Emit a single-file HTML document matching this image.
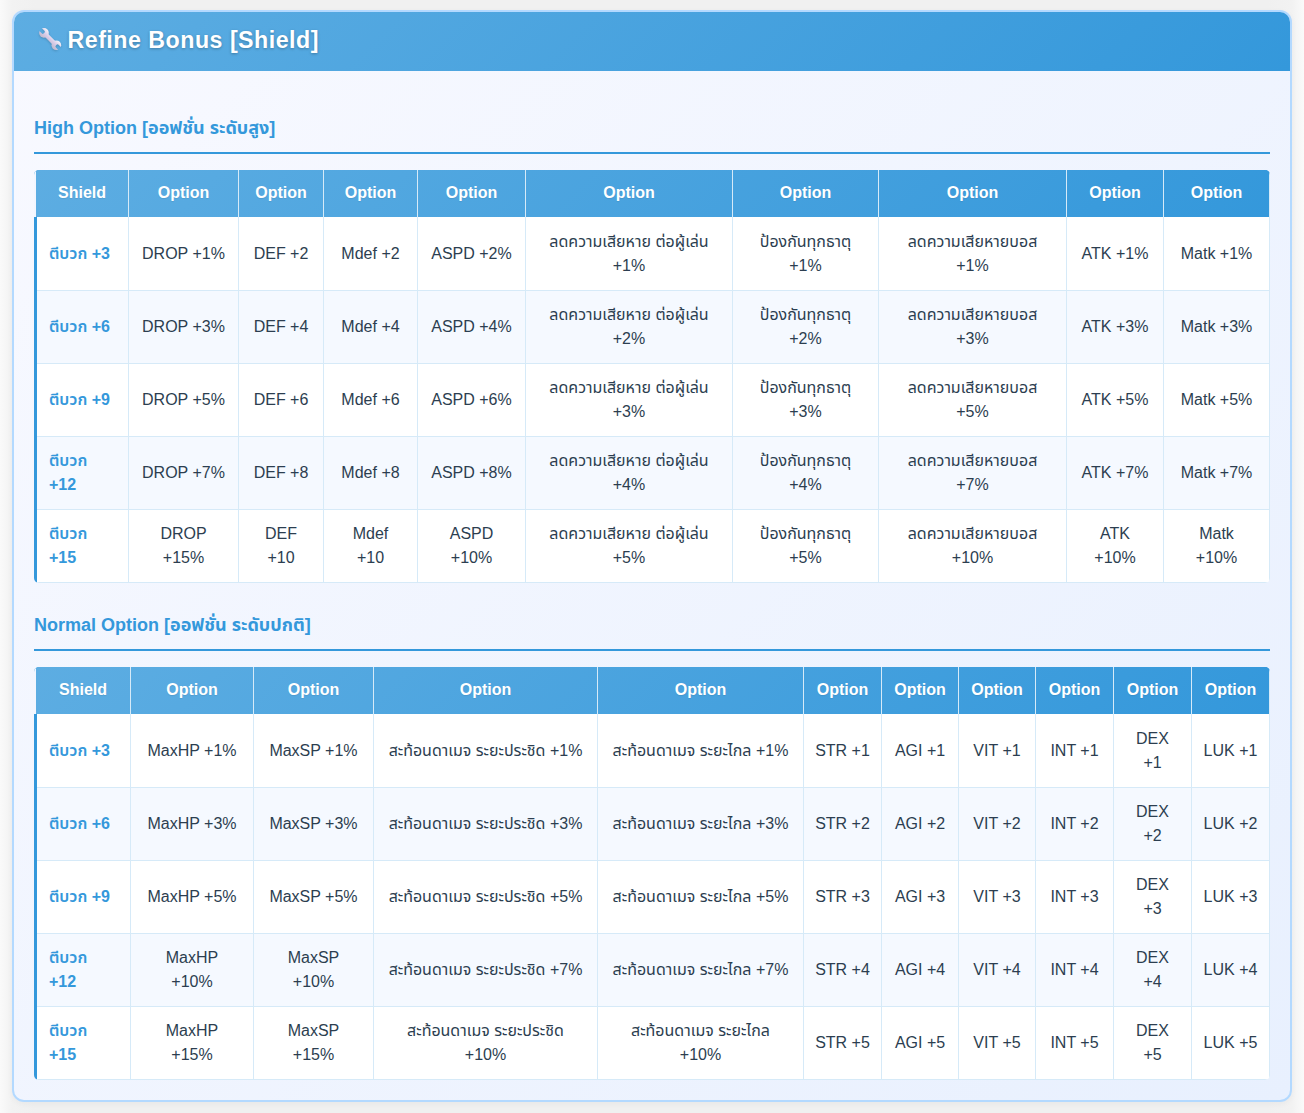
<!DOCTYPE html>
<html lang="th"><head><meta charset="utf-8"><title>Refine Bonus [Shield]</title>
<style>
*{box-sizing:border-box}
html,body{margin:0;padding:0}
body{width:1304px;height:1113px;background:linear-gradient(90deg,#fafafa 0,#f6f6f6 6px,#f2f2f2 12px,#f0f0f0 36px,#f0f0f0 1268px,#f2f2f2 1292px,#f6f6f6 1298px,#fafafa 1304px);position:relative;overflow:hidden;
 font-family:"Liberation Sans","Noto Sans Thai","Noto Sans Thai UI","Loma","Garuda","Sarabun","Tahoma",sans-serif;font-size:16px;line-height:24px;color:#2c3e50}
.card{position:absolute;left:12px;top:10px;width:1280px;height:1092px;border:2px solid #b3d9ff;border-radius:12px;
 background:linear-gradient(135deg,#f8f9ff 0%,#e8f0fe 100%);box-shadow:0 2px 6px rgba(0,0,0,.04);overflow:hidden}
.hdr{position:absolute;left:0;top:0;width:1276px;height:59px;background:linear-gradient(135deg,#5dade2 0%,#3498db 100%);color:#fff}
.hdr .ic{position:absolute;left:22px;top:13px;filter:drop-shadow(0 1px 1px rgba(0,0,0,.18))}
.hdr .ttl{position:absolute;left:53.5px;top:13px;font-size:23.2px;letter-spacing:.5px;line-height:30px;font-weight:700;white-space:nowrap;text-shadow:0 1px 3px rgba(0,0,0,.28)}
.body{position:absolute;left:20px;top:59px;width:1236px}
.st{position:absolute;left:0;width:1236px;margin:0;font-size:18px;line-height:26px;font-weight:700;color:#3498db;border-bottom:2px solid #3498db;height:40px;white-space:nowrap}
.s1{top:43px}
.st span{position:relative;top:1px}
.s2{top:540px}
table.t{position:absolute;left:0;width:1236px;table-layout:fixed;border-collapse:separate;border-spacing:0;border-radius:5px;overflow:hidden}
table.t:nth-of-type(1){top:99px}
table.t:nth-of-type(2){top:596px}
.t th{height:47px;padding:0 4px 2px;text-shadow:0 1px 1px rgba(0,0,0,.08);background:transparent;color:#fff;font-weight:700;text-align:center;border-right:1px solid #d6eaf8;vertical-align:middle;white-space:nowrap}
.t thead tr{background:linear-gradient(135deg,#5dade2 0%,#3498db 100%)}
.t thead{background:linear-gradient(135deg,#5dade2 0%,#3498db 100%)}
.t td{padding:0 4px;text-align:center;vertical-align:middle;border-right:1px solid #d6eaf8;border-bottom:1px solid #d6eaf8;background:#fff;white-space:nowrap}
.t tbody tr{height:73px}
.t tbody tr:first-child{height:74px}
.t tbody tr:nth-child(even) td{background:#f5f9ff}
.t td:first-child{border-left:0;border-bottom:0;box-shadow:inset 3px 0 0 #3498db,inset 0 -1px 0 #d6eaf8;text-align:left;padding-left:15px;padding-bottom:1px;color:#3498db;font-weight:600}
.t th:first-child{border-left:2px solid #f3f6fe}

</style></head><body>
<div class="card">
<div class="hdr"><svg class="ic" viewBox="0 0 32 32" width="32" height="32"><defs><linearGradient id="wg" x1="0" y1="-5" x2="0" y2="5" gradientUnits="userSpaceOnUse"><stop offset="0" stop-color="#f3eff7"/><stop offset=".5" stop-color="#d8cbe7"/><stop offset="1" stop-color="#c2bacd"/></linearGradient><mask id="wm" maskUnits="userSpaceOnUse" x="-20" y="-10" width="40" height="20"><rect x="-20" y="-10" width="40" height="20" fill="#fff"/><rect x="-18" y="-2.1" width="8.6" height="4.2" rx="1.6" fill="#000"/><rect x="9.4" y="-2.1" width="8.6" height="4.2" rx="1.6" fill="#000"/></mask></defs><g transform="translate(14.15 14.1) rotate(45) scale(.91)"><g mask="url(#wm)" fill="url(#wg)"><circle cx="-9.6" cy="0" r="5.3"/><circle cx="9.6" cy="0" r="5.3"/><rect x="-9" y="-2.4" width="18" height="4.8"/></g></g></svg><span class="ttl">Refine Bonus [Shield]</span></div>
<div class="body">
<h3 class="st s1"><span>High Option [ออฟชั่น ระดับสูง]</span></h3>
<table class="t"><colgroup><col style="width:95px"><col style="width:110px"><col style="width:85px"><col style="width:94px"><col style="width:108px"><col style="width:207px"><col style="width:146px"><col style="width:188px"><col style="width:97px"><col style="width:106px"></colgroup>
<thead><tr><th>Shield</th><th>Option</th><th>Option</th><th>Option</th><th>Option</th><th>Option</th><th>Option</th><th>Option</th><th>Option</th><th>Option</th></tr></thead>
<tbody>
<tr><td>ตีบวก +3</td><td>DROP +1%</td><td>DEF +2</td><td>Mdef +2</td><td>ASPD +2%</td><td>ลดความเสียหาย ต่อผู้เล่น<br>+1%</td><td>ป้องกันทุกธาตุ<br>+1%</td><td>ลดความเสียหายบอส<br>+1%</td><td>ATK +1%</td><td>Matk +1%</td></tr>
<tr><td>ตีบวก +6</td><td>DROP +3%</td><td>DEF +4</td><td>Mdef +4</td><td>ASPD +4%</td><td>ลดความเสียหาย ต่อผู้เล่น<br>+2%</td><td>ป้องกันทุกธาตุ<br>+2%</td><td>ลดความเสียหายบอส<br>+3%</td><td>ATK +3%</td><td>Matk +3%</td></tr>
<tr><td>ตีบวก +9</td><td>DROP +5%</td><td>DEF +6</td><td>Mdef +6</td><td>ASPD +6%</td><td>ลดความเสียหาย ต่อผู้เล่น<br>+3%</td><td>ป้องกันทุกธาตุ<br>+3%</td><td>ลดความเสียหายบอส<br>+5%</td><td>ATK +5%</td><td>Matk +5%</td></tr>
<tr><td>ตีบวก<br>+12</td><td>DROP +7%</td><td>DEF +8</td><td>Mdef +8</td><td>ASPD +8%</td><td>ลดความเสียหาย ต่อผู้เล่น<br>+4%</td><td>ป้องกันทุกธาตุ<br>+4%</td><td>ลดความเสียหายบอส<br>+7%</td><td>ATK +7%</td><td>Matk +7%</td></tr>
<tr><td>ตีบวก<br>+15</td><td>DROP<br>+15%</td><td>DEF<br>+10</td><td>Mdef<br>+10</td><td>ASPD<br>+10%</td><td>ลดความเสียหาย ต่อผู้เล่น<br>+5%</td><td>ป้องกันทุกธาตุ<br>+5%</td><td>ลดความเสียหายบอส<br>+10%</td><td>ATK<br>+10%</td><td>Matk<br>+10%</td></tr>
</tbody></table>

<h3 class="st s2"><span>Normal Option [ออฟชั่น ระดับปกติ]</span></h3>
<table class="t"><colgroup><col style="width:97px"><col style="width:123px"><col style="width:120px"><col style="width:224px"><col style="width:206px"><col style="width:78px"><col style="width:77px"><col style="width:77px"><col style="width:78px"><col style="width:78px"><col style="width:78px"></colgroup>
<thead><tr><th>Shield</th><th>Option</th><th>Option</th><th>Option</th><th>Option</th><th>Option</th><th>Option</th><th>Option</th><th>Option</th><th>Option</th><th>Option</th></tr></thead>
<tbody>
<tr><td>ตีบวก +3</td><td>MaxHP +1%</td><td>MaxSP +1%</td><td>สะท้อนดาเมจ ระยะประชิด +1%</td><td>สะท้อนดาเมจ ระยะไกล +1%</td><td>STR +1</td><td>AGI +1</td><td>VIT +1</td><td>INT +1</td><td>DEX<br>+1</td><td>LUK +1</td></tr>
<tr><td>ตีบวก +6</td><td>MaxHP +3%</td><td>MaxSP +3%</td><td>สะท้อนดาเมจ ระยะประชิด +3%</td><td>สะท้อนดาเมจ ระยะไกล +3%</td><td>STR +2</td><td>AGI +2</td><td>VIT +2</td><td>INT +2</td><td>DEX<br>+2</td><td>LUK +2</td></tr>
<tr><td>ตีบวก +9</td><td>MaxHP +5%</td><td>MaxSP +5%</td><td>สะท้อนดาเมจ ระยะประชิด +5%</td><td>สะท้อนดาเมจ ระยะไกล +5%</td><td>STR +3</td><td>AGI +3</td><td>VIT +3</td><td>INT +3</td><td>DEX<br>+3</td><td>LUK +3</td></tr>
<tr><td>ตีบวก<br>+12</td><td>MaxHP<br>+10%</td><td>MaxSP<br>+10%</td><td>สะท้อนดาเมจ ระยะประชิด +7%</td><td>สะท้อนดาเมจ ระยะไกล +7%</td><td>STR +4</td><td>AGI +4</td><td>VIT +4</td><td>INT +4</td><td>DEX<br>+4</td><td>LUK +4</td></tr>
<tr><td>ตีบวก<br>+15</td><td>MaxHP<br>+15%</td><td>MaxSP<br>+15%</td><td>สะท้อนดาเมจ ระยะประชิด<br>+10%</td><td>สะท้อนดาเมจ ระยะไกล<br>+10%</td><td>STR +5</td><td>AGI +5</td><td>VIT +5</td><td>INT +5</td><td>DEX<br>+5</td><td>LUK +5</td></tr>
</tbody></table>

</div>
</div>
</body></html>
